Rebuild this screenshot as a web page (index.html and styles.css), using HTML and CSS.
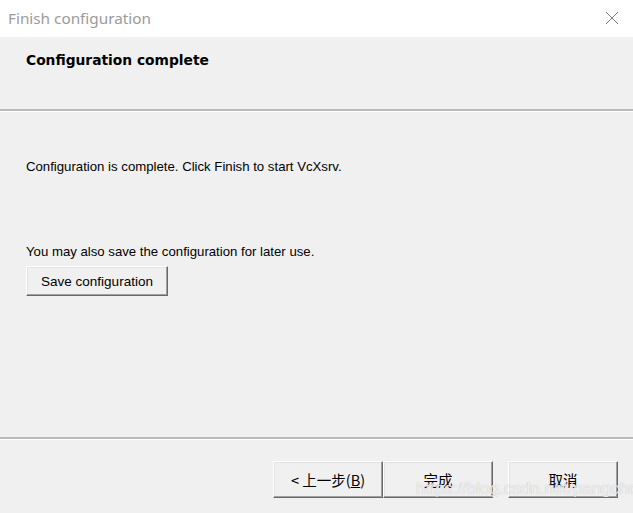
FILE: index.html
```html
<!DOCTYPE html>
<html>
<head>
<meta charset="utf-8">
<link rel="stylesheet" href="styles.css">
</head>
<body>
<div class="window">
  <div class="titlebar">
    <span class="title">Finish configuration</span>
    <svg class="close" width="14" height="14" viewBox="0 0 14 14"><path d="M1 1 L13 13 M13 1 L1 13" stroke="#7a7a7a" stroke-width="1" fill="none"/></svg>
  </div>
  <div class="header">
    <div class="heading">Configuration complete</div>
  </div>
  <div class="sep"></div>
  <div class="content">
    <p class="line1">Configuration is complete. Click Finish to start VcXsrv.</p>
    <p class="line2">You may also save the configuration for later use.</p>
    <button class="btn save">Save configuration</button>
  </div>
  <div class="sep"></div>
  <div class="footer">
    <button class="btn wiz">&lt; 上一步(<u>B</u>)</button>
    <button class="btn wiz">完成</button>
    <button class="btn wiz cancel">取消</button>
  </div>
  <div class="watermark">https://blog.csdn.net/pangchol</div>
</div>
</body>
</html>
```
FILE: styles.css
```css
html, body {
  margin: 0;
  padding: 0;
  background: #f0f0f0;
}
.window {
  position: relative;
  width: 633px;
  height: 513px;
  display: flex;
  flex-direction: column;
  background: #f0f0f0;
  overflow: hidden;
}
.titlebar {
  height: 37px;
  background: #ffffff;
  display: flex;
  align-items: center;
  justify-content: space-between;
  padding: 0 14px 0 8px;
  flex: none;
}
.title {
  font-family: "Noto Sans", "Open Sans", sans-serif;
  font-size: 15.3px;
  color: #9b9b9b;
  margin-top: -2px;
}
.close {
  display: block;
  margin-top: -2px;
}
.header {
  height: 72px;
  flex: none;
  box-sizing: border-box;
  padding: 15px 0 0 26px;
}
.heading {
  font-family: "DejaVu Sans", Verdana, sans-serif;
  font-weight: bold;
  font-size: 13.8px;
  color: #000;
}
.sep {
  flex: none;
  height: 2px;
  background: #b9b9b9;
  border-bottom: 1px solid #ffffff;
}
.content {
  height: 325px;
  flex: none;
  box-sizing: border-box;
  padding: 47px 0 0 26px;
  font-family: "Liberation Sans", Arial, sans-serif;
  font-size: 13.2px;
  color: #000;
}
.content p {
  margin: 0;
  line-height: 15px;
}
.line2 {
  margin-top: 70px !important;
}
.btn {
  font-family: "Liberation Sans", "Noto Sans CJK SC", sans-serif;
  font-size: 13.5px;
  color: #000;
  background: #f0f0f0;
  border: 1px solid;
  border-color: #ffffff #696969 #696969 #ffffff;
  box-shadow: inset -1px -1px 0 #a0a0a0, inset 1px 1px 0 #e3e3e3;
  padding: 0;
  margin: 0;
  display: flex;
  align-items: center;
  justify-content: center;
}
.save {
  width: 142px;
  height: 30px;
  margin-top: 7px;
}
.footer {
  flex: 1;
  display: flex;
  align-items: flex-start;
  padding: 21px 0 0 273px;
}
.wiz {
  width: 110px;
  height: 37px;
  font-family: "Noto Sans CJK SC", "Liberation Sans", sans-serif;
  font-size: 14.5px;
}
.cancel {
  margin-left: 15px;
}
.watermark {
  position: absolute;
  left: 416px;
  top: 479px;
  font-family: "Liberation Sans", Arial, sans-serif;
  font-size: 17px;
  color: rgba(255,255,255,0.8);
  text-shadow: 0 0 1px rgba(110,110,110,0.5);
  pointer-events: none;
  white-space: nowrap;
}
```
